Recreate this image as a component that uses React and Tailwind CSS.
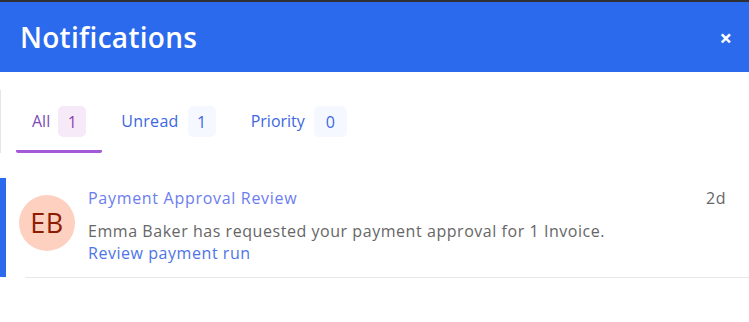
import React, { useState } from 'react';

const tabs = [
  { id: 'all', label: 'All', count: 1, w: 'w-[28px]', trk: '-mr-px' },
  { id: 'unread', label: 'Unread', count: 1, w: 'w-[28px]', trk: 'tracking-[0.3px]' },
  { id: 'priority', label: 'Priority', count: 0, w: 'w-[33px]', trk: '' }
];

function Tab({ tab, active, onClick }) {
  return (
    <button
      onClick={onClick}
      className={
        'flex items-center gap-[9px] px-4 pt-4 pb-[13px] border-b-[3px] rounded-b-[2px] ' +
        (active ? 'border-[#a35ad9] text-[#7d4cb3]' : 'border-transparent text-[#3d67e3]')
      }
    >
      <span className={'text-[16px] leading-[22px] -mt-[2px] ' + tab.trk}>{tab.label}</span>
      <span
        className={
          'h-[31px] rounded-[5px] flex items-center justify-center text-[16px] ' + tab.w + ' ' +
          (active ? 'bg-[#f6eaf8] text-[#8e3fb3]' : 'bg-[#f5f9ff] text-[#3d67e3]')
        }
      >
        {tab.count}
      </span>
    </button>
  );
}

export default function App() {
  const [active, setActive] = useState('all');

  return (
    <div className="w-[749px] h-[322px] bg-white font-['Open_Sans',sans-serif] overflow-hidden">
      <div className="h-[2px] bg-[#2f3033]" />
      <header className="h-[70px] bg-[#2b6aec] flex items-center justify-between pl-5 pr-[17px]">
        <h1 className="text-[28px] font-semibold text-white tracking-[0.3px]">Notifications</h1>
        <button className="text-white text-[22px] font-bold leading-none">×</button>
      </header>

      <div className="mt-[18px] border-l border-[#e6e6ea] pl-[15px] flex gap-[3px]">
        {tabs.map(t => (
          <Tab key={t.id} tab={t} active={active === t.id} onClick={() => setActive(t.id)} />
        ))}
      </div>

      <div className="mt-[25px]">
        <div className="flex">
          <div className="w-[6px] bg-[#2b6aec]" />
          <div className="flex-1 flex items-start pl-[13px] pr-[23px] pt-2 pb-[13px]">
            <div className="mt-[9px] w-[56px] h-[56px] rounded-full bg-[#fdd0bf] flex items-center justify-center text-[#8c1c02] text-[27px] tracking-[0.5px] shrink-0">
              EB
            </div>
            <div className="flex-1 ml-[13px]">
              <div className="flex justify-between items-center h-6">
                <span className="text-[16px] tracking-[0.7px] text-[#6c7df0]">Payment Approval Review</span>
                <span className="text-[16px] tracking-[0.5px] text-[#666]">2d</span>
              </div>
              <p className="mt-[10px] text-[16px] leading-[22px] tracking-[0.55px] text-[#666]">
                Emma Baker has requested your payment approval for 1 Invoice.
              </p>
              <a href="#" className="block text-[16px] leading-[22px] tracking-[0.55px] text-[#4d74e8]">Review payment run</a>
            </div>
          </div>
        </div>
        <div className="ml-[25px] border-b border-[#e8e8e8]" />
      </div>
    </div>
  );
}
